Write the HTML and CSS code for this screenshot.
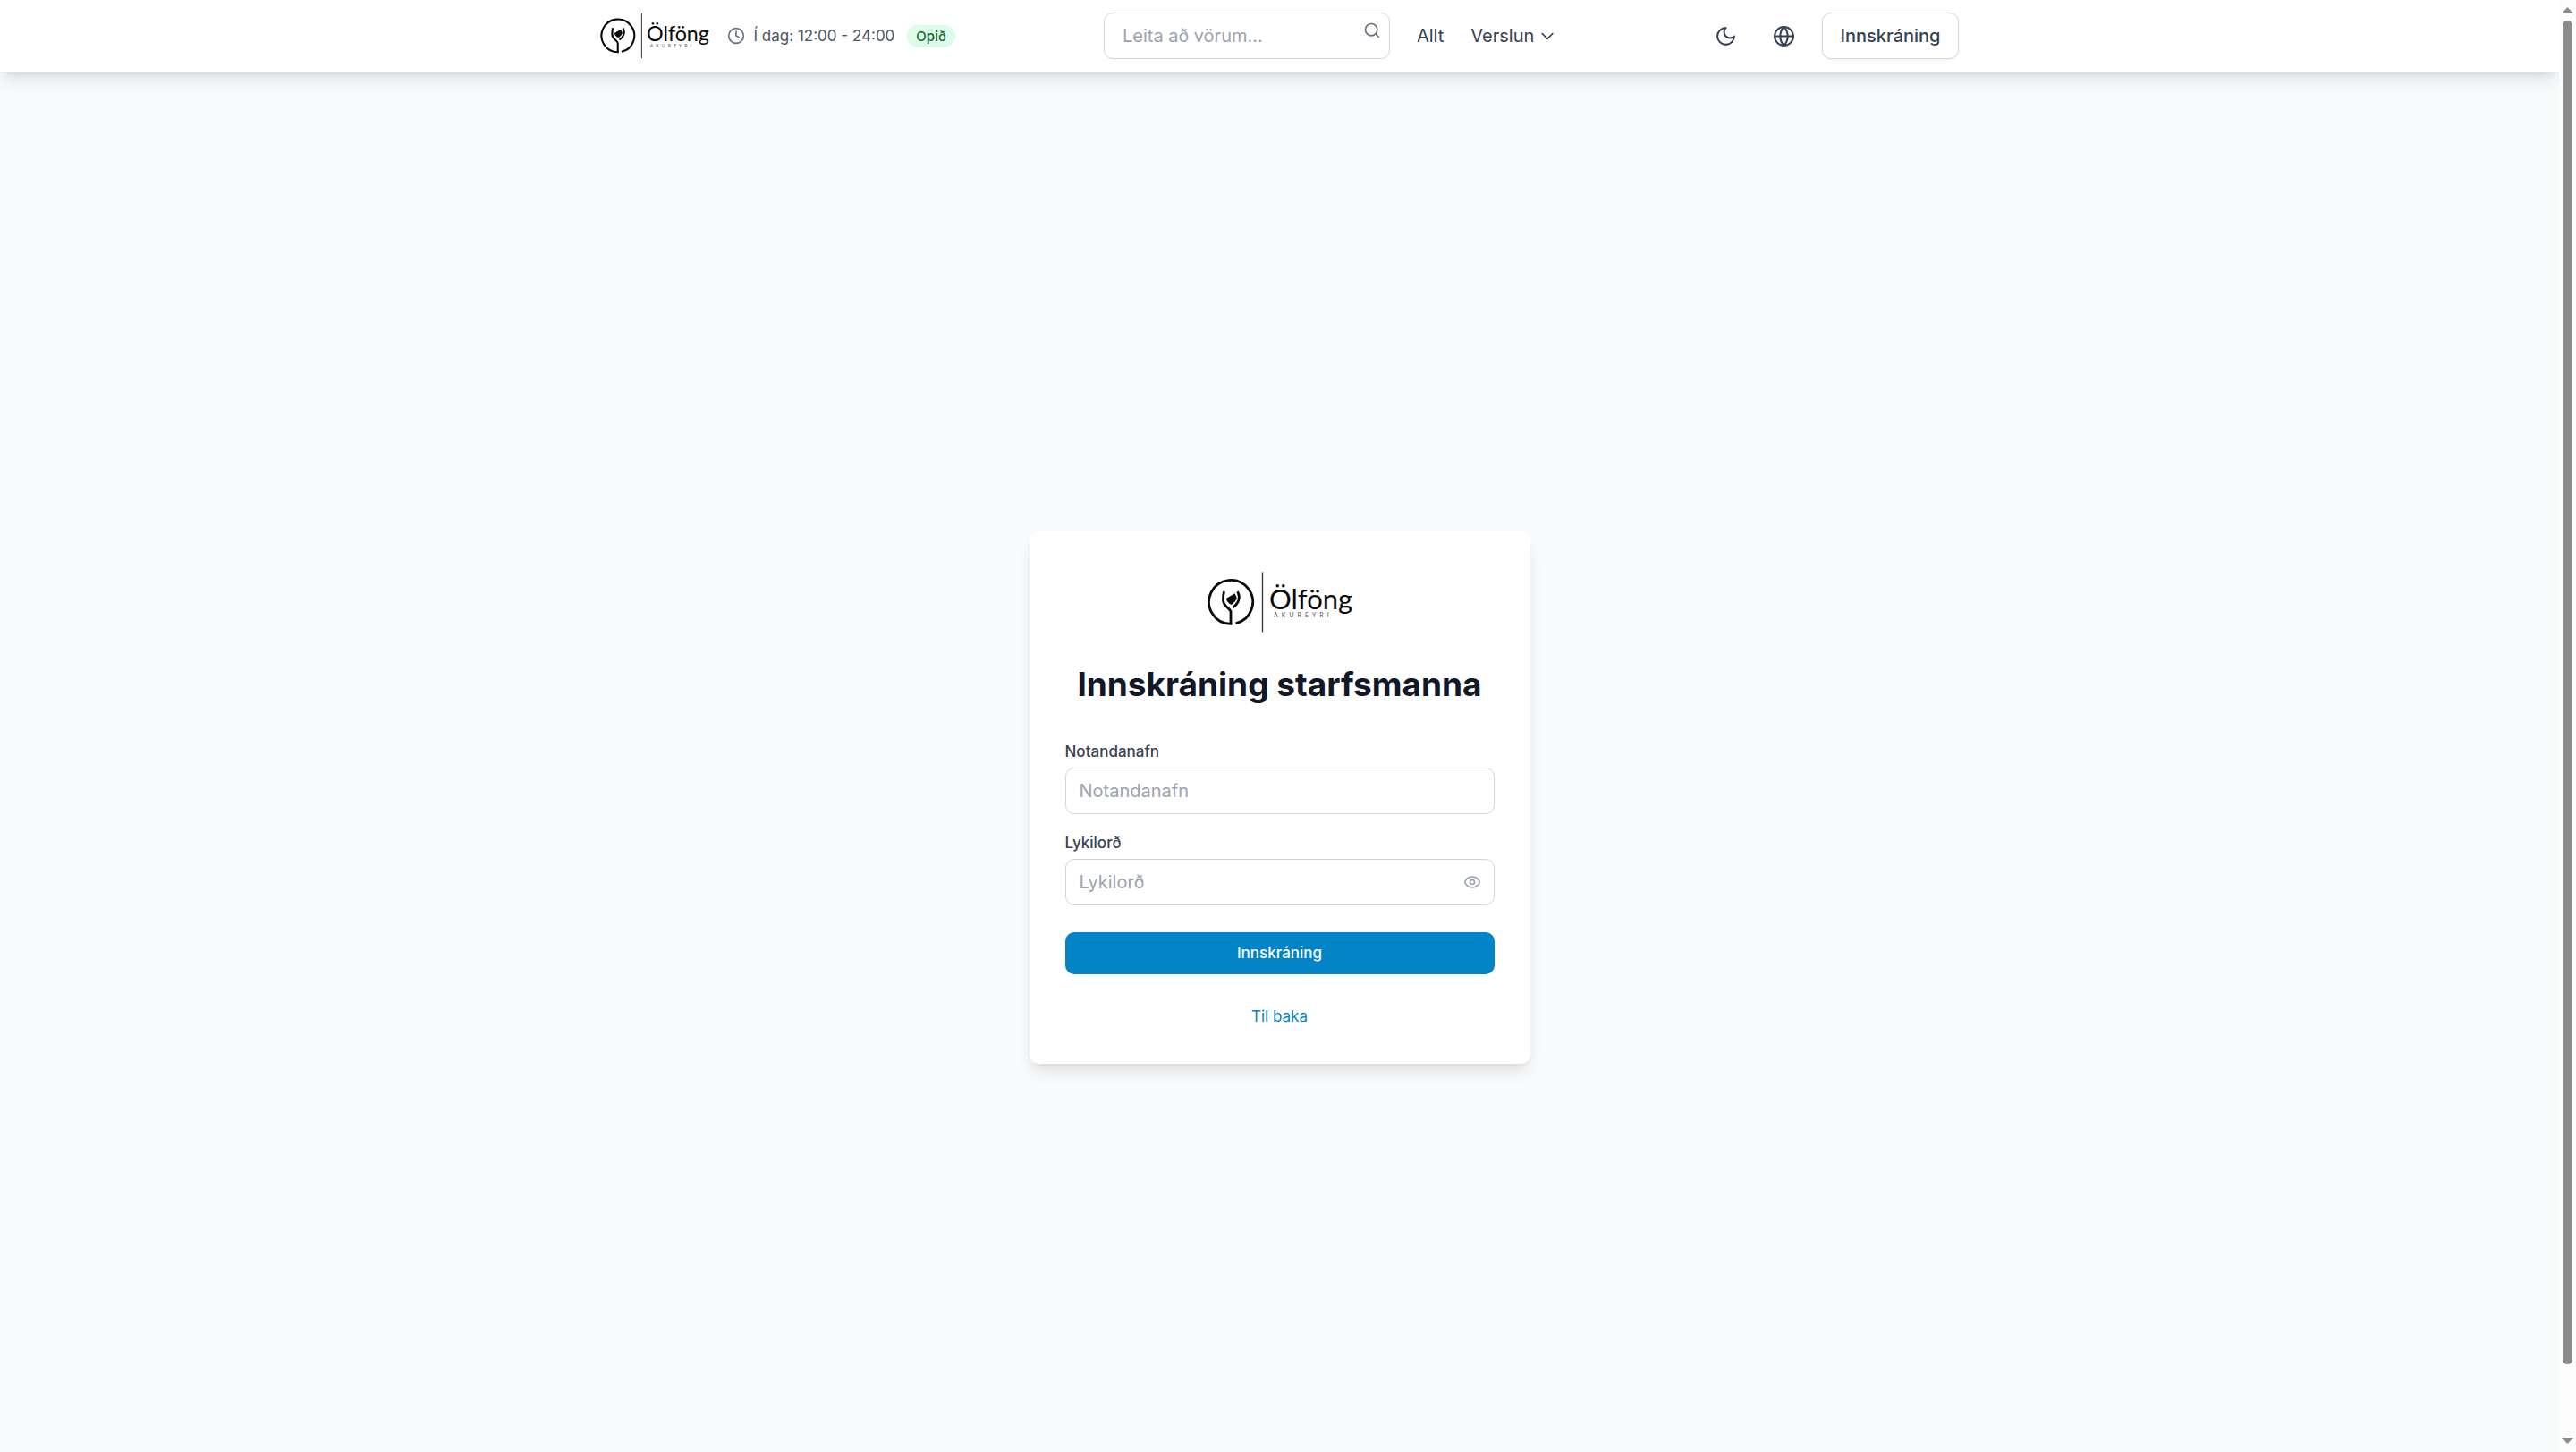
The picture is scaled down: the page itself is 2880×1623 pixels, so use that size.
FILE: index.html
```html
<!DOCTYPE html>
<html lang="is">
<head>
<meta charset="utf-8">
<meta name="viewport" content="width=device-width, initial-scale=1">
<title>Innskráning starfsmanna</title>
<link rel="stylesheet" href="styles.css">
</head>
<body>
<div class="window">
  <div class="page">
    <header class="header">
      <div class="container">
        <div class="brand">
          <a href="#" aria-label="Ölföng Akureyri">
            <svg class="logo" viewBox="0 0 162 80">
              <g fill="none" stroke="#0a0a0a" stroke-width="2.800">
                <path d="M27.400 64.400H26A24.500 24.500 0 1 1 31.500 63.800"/>
                <path d="M26 64V51C26 47 17.500 45.500 17.500 37.500 17.500 34 17.500 31 18.800 28.200"/>
                <path d="M33.600 28.200C35.600 32 35.800 36.500 34 39.800 32.800 42.400 30.800 44.200 28.400 46"/>
              </g>
              <path d="M20.800 36 30.600 30.200 32.800 35.600Q32.500 38.500 26.800 43 21.500 40.500 20.800 36Z" fill="#0a0a0a"/>
              <path d="M61.500 6.500V73.500" stroke="#333" stroke-width="1.300"/>
              <text x="69" y="48" class="logo-name">Ölföng</text>
              <text x="74" y="57" class="logo-town">AKUREYRI</text>
            </svg>
          </a>
          <div class="hours">
            <svg class="icon icon-small" viewBox="0 0 24 24"><circle cx="12" cy="12" r="10"/><path d="M12 6v6l4 2"/></svg>
            <span>Í dag: 12:00 - 24:00</span>
            <span class="badge">Opið</span>
          </div>
        </div>
        <nav class="nav">
          <div class="search">
            <input class="input" type="search" placeholder="Leita að vörum..." aria-label="Leita að vörum">
            <button class="search-button" type="button" aria-label="Leita"><svg class="icon icon-small" viewBox="0 0 24 24"><circle cx="11" cy="11" r="8"/><path d="m21 21-4.300-4.300"/></svg></button>
          </div>
          <a href="#">Allt</a>
          <button class="menu-button" type="button">Verslun <svg class="icon icon-small" viewBox="0 0 24 24"><path d="m5 9 7 7 7-7"/></svg></button>
        </nav>
        <div class="actions">
          <button class="icon-button" type="button" aria-label="Dökkt þema"><svg class="icon" viewBox="0 0 24 24"><path d="M12 3a6 6 0 0 0 9 9 9 9 0 1 1-9-9Z"/></svg></button>
          <button class="icon-button" type="button" aria-label="Tungumál"><svg class="icon" viewBox="0 0 24 24"><circle cx="12" cy="12" r="10"/><path d="M12 2a14.500 14.500 0 0 0 0 20 14.500 14.500 0 0 0 0-20"/><path d="M2 12h20"/></svg></button>
          <a class="login-link" href="#">Innskráning</a>
        </div>
      </div>
    </header>
    <main class="main">
      <section class="card">
        <svg class="logo logo-large" viewBox="0 0 162 80" role="img" aria-label="Ölföng Akureyri">
          <g fill="none" stroke="#0a0a0a" stroke-width="2.800">
            <path d="M27.400 64.400H26A24.500 24.500 0 1 1 31.500 63.800"/>
            <path d="M26 64V51C26 47 17.500 45.500 17.500 37.500 17.500 34 17.500 31 18.800 28.200"/>
            <path d="M33.600 28.200C35.600 32 35.800 36.500 34 39.800 32.800 42.400 30.800 44.200 28.400 46"/>
          </g>
          <path d="M20.800 36 30.600 30.200 32.800 35.600Q32.500 38.500 26.800 43 21.500 40.500 20.800 36Z" fill="#0a0a0a"/>
          <path d="M61.500 6.500V73.500" stroke="#333" stroke-width="1.300"/>
          <text x="69" y="48" class="logo-name">Ölföng</text>
          <text x="74" y="57" class="logo-town">AKUREYRI</text>
        </svg>
        <h1>Innskráning starfsmanna</h1>
        <form>
          <div class="field">
            <label for="username">Notandanafn</label>
            <input class="input" id="username" type="text" placeholder="Notandanafn">
          </div>
          <div class="field">
            <label for="password">Lykilorð</label>
            <div class="password">
              <input class="input" id="password" type="password" placeholder="Lykilorð">
              <button class="reveal" type="button" aria-label="Sýna lykilorð"><svg class="icon icon-small" viewBox="0 0 24 24"><path d="M2.062 12.348a1 1 0 0 1 0-.696 10.750 10.750 0 0 1 19.876 0 1 1 0 0 1 0 .696 10.750 10.750 0 0 1-19.876 0"/><circle cx="12" cy="12" r="3"/></svg></button>
            </div>
          </div>
          <button class="submit" type="submit">Innskráning</button>
        </form>
        <a class="back" href="#">Til baka</a>
      </section>
    </main>
  </div>
  <div class="scrollbar" aria-hidden="true">
    <svg class="arrow" viewBox="0 0 13 7"><path d="M6.500 0 13 7H0Z"/></svg>
    <div class="track"><div class="thumb"></div></div>
    <svg class="arrow" viewBox="0 0 13 7"><path d="M0 0H13L6.500 7Z"/></svg>
  </div>
</div>
</body>
</html>
```
FILE: styles.css
```css
* { box-sizing: border-box; }
body { margin: 0; font-family: Inter, "Liberation Sans", sans-serif; font-size: 20px; line-height: 30px; color: #374151; background: #f9fafb; }
a { color: inherit; text-decoration: none; }
button, input { font: inherit; color: inherit; margin: 0; }
button { padding: 0; border: 0; background: none; cursor: pointer; }
svg { display: block; }

.window { display: grid; grid-template-columns: minmax(0, 1fr) 19px; height: 100vh; }
.page { overflow: auto; scrollbar-width: none; }

.header { position: relative; background: #fff; border-bottom: 1px solid #e5e7eb; box-shadow: 0 12px 19px -4px rgba(0, 0, 0, .1), 0 5px 8px -5px rgba(0, 0, 0, .1); }
.container { display: flex; align-items: center; justify-content: space-between; max-width: 1600px; min-height: 80px; margin: 0 auto; padding: 0 40px; }
.brand, .hours, .nav, .actions, .menu-button { display: flex; align-items: center; }
.brand { gap: 20px; }
.logo { width: 122px; height: 60px; }
.logo-large { width: 162px; height: 80px; margin: 0 auto; }
.logo-name { font: 400 31px Lato, sans-serif; fill: #0a0a0a; }
.logo-town { font: 400 7px Lato, sans-serif; letter-spacing: 4px; fill: #555; }
.hours { gap: 10px; font-size: 17px; color: #4b5563; }
.hours .icon { color: #6b7280; }
.badge { margin-left: 4px; padding: 0 10px; border-radius: 13px; background: #dcfce7; color: #166534; font-size: 15px; font-weight: 500; line-height: 25px; }
.icon { width: 25px; height: 25px; fill: none; stroke: currentColor; stroke-width: 2; stroke-linecap: round; stroke-linejoin: round; }
.icon-small { width: 20px; height: 20px; }

.input { display: block; width: 100%; height: 52px; padding: 0 15px; border: 1px solid #d1d5db; border-radius: 10px; background: #fff; outline: none; appearance: none; }
.input::placeholder { color: #9ca3af; opacity: 1; }
.nav { gap: 30px; }
.search { position: relative; width: 320px; }
.search .input { padding: 0 20px; }
.search-button { position: absolute; top: 10px; right: 10px; color: #6b7280; }
.menu-button { gap: 5px; }
.actions { gap: 20px; }
.icon-button { padding: 10px; }
.login-link { padding: 10px 20px; border: 1px solid #d1d5db; border-radius: 10px; font-weight: 500; box-shadow: 0 1px 3px rgba(0, 0, 0, .05); }

.main { display: flex; align-items: center; justify-content: center; min-height: 100vh; padding-bottom: 4px; background: #f9fafb; }
.card { width: 100%; max-width: 560px; padding: 40px 40px 38px; border-radius: 10px; background: #fff; box-shadow: 0 12px 19px -4px rgba(0, 0, 0, .1), 0 5px 8px -5px rgba(0, 0, 0, .1); }
h1 { margin: 29px 0 41px; font-size: 37px; font-weight: 700; line-height: 45px; color: #111827; text-align: center; white-space: nowrap; }
.field { margin-bottom: 20px; }
label { display: block; margin-bottom: 5px; font-size: 17px; font-weight: 500; line-height: 25px; }
.password { position: relative; }
.reveal { position: absolute; top: 16px; right: 15px; color: #9ca3af; }
.submit { display: block; width: 100%; margin-top: 30px; padding: 11px 20px; border-radius: 10px; background: #0284c7; color: #fff; font-size: 17px; font-weight: 500; line-height: 25px; }
.back { display: block; margin-top: 32px; font-size: 17px; color: #0284c7; text-align: center; }

.scrollbar { display: flex; flex-direction: column; align-items: center; gap: 8px; padding: 8px 0 9px; background: #fcfcfc; }
.arrow { width: 13px; height: 7px; fill: #8b8b8b; }
.track { flex: 1; width: 11px; }
.thumb { height: calc(100% - 74px); border-radius: 6px; background: #8b8b8b; }
```
